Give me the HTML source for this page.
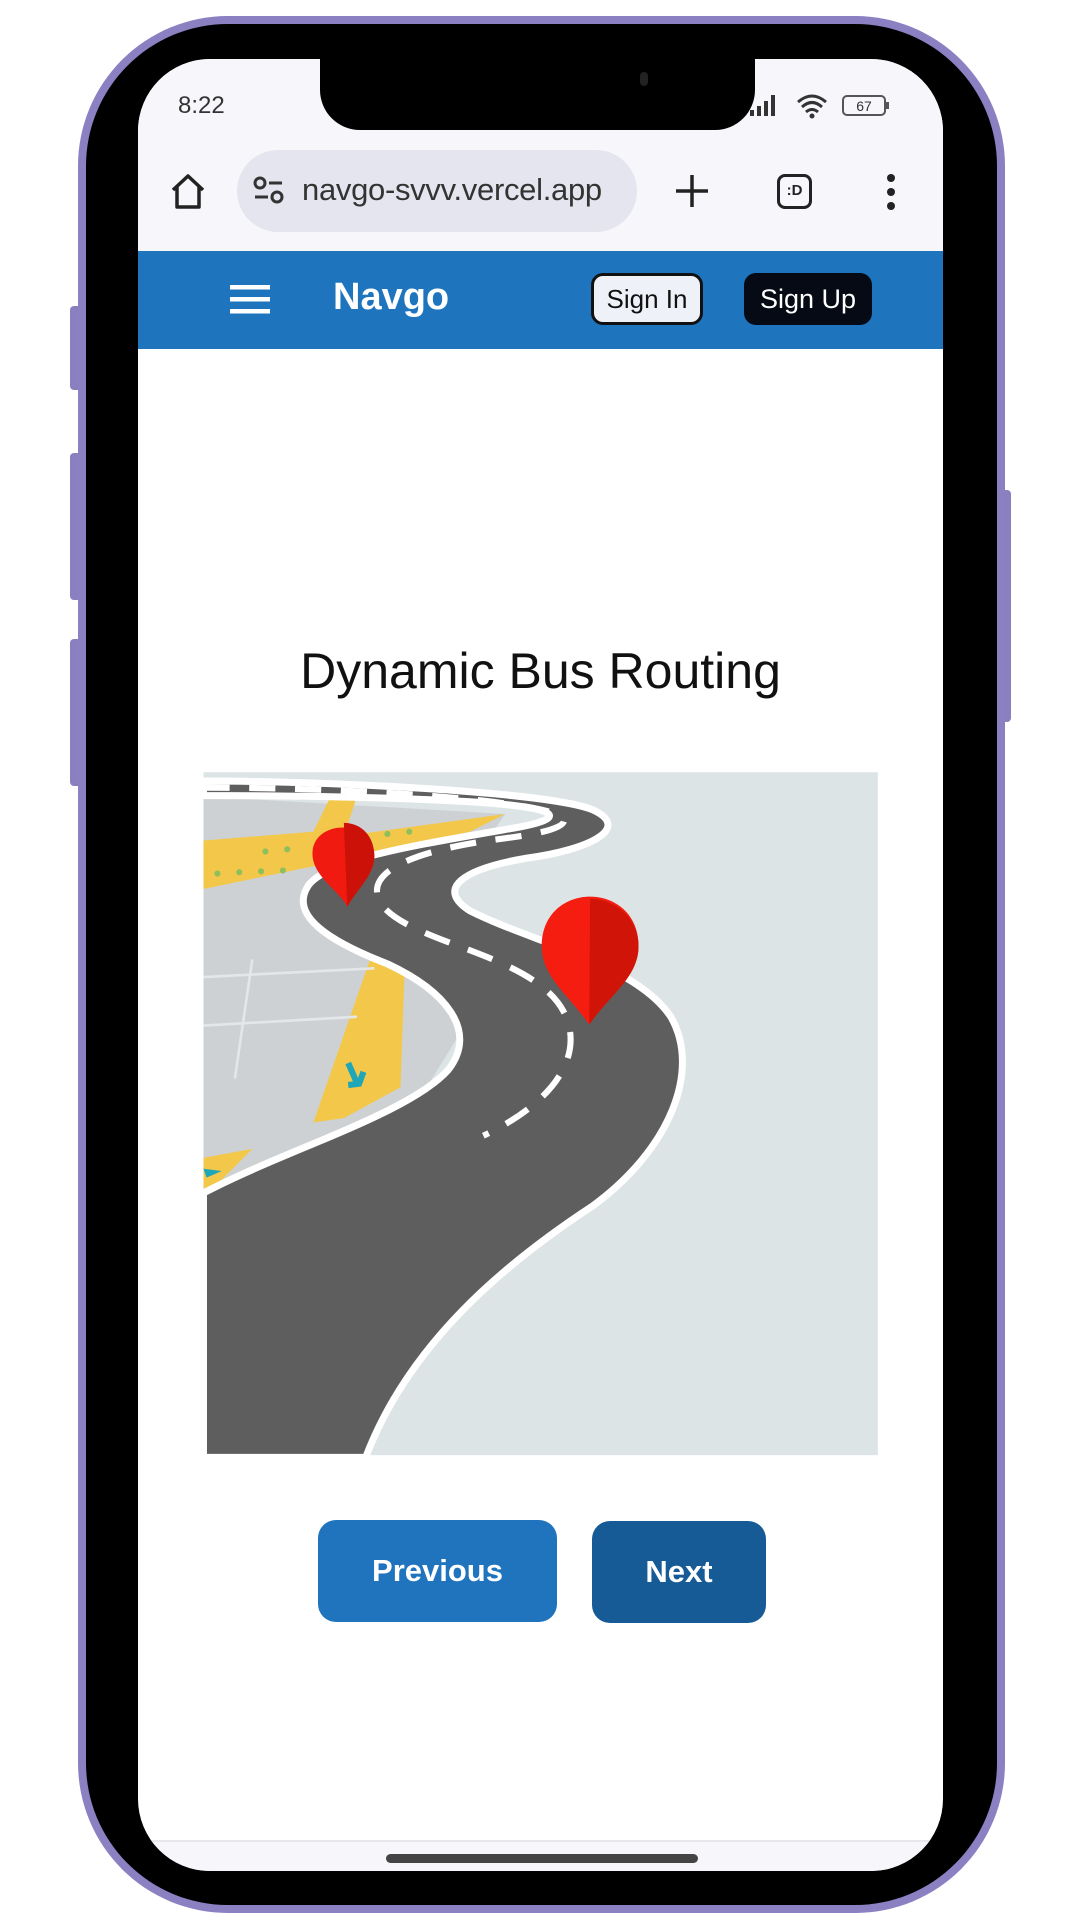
<!DOCTYPE html>
<html><head><meta charset="utf-8"><style>
*{margin:0;padding:0;box-sizing:border-box}
html,body{width:1080px;height:1920px;background:#fff;overflow:hidden;font-family:"Liberation Sans",sans-serif}
.abs{position:absolute}
</style></head><body>
<!-- side buttons -->
<div class="abs" style="left:70px;top:306px;width:12px;height:84px;background:#8a80c0;border-radius:4px"></div>
<div class="abs" style="left:70px;top:453px;width:12px;height:147px;background:#8a80c0;border-radius:4px"></div>
<div class="abs" style="left:70px;top:639px;width:12px;height:147px;background:#8a80c0;border-radius:4px"></div>
<div class="abs" style="left:998px;top:490px;width:13px;height:232px;background:#8a80c0;border-radius:4px"></div>
<!-- frame -->
<div class="abs" style="left:78px;top:16px;width:927px;height:1897px;background:#8a80c2;border-radius:150px"></div>
<div class="abs" style="left:86px;top:24px;width:911px;height:1881px;background:#000;border-radius:142px"></div>
<!-- screen -->
<div class="abs" style="left:138px;top:59px;width:805px;height:1812px;background:#fff;border-radius:72px;overflow:hidden">
  <div class="abs" style="left:0;top:0;width:805px;height:192px;background:#f7f7fb"></div>
  <div class="abs" style="left:0;top:1781px;width:805px;height:40px;background:#f7f7fb;border-top:2px solid #e8e8ec"></div>
  <div class="abs" style="left:248px;top:1795px;width:312px;height:9px;background:#444;border-radius:5px"></div>
</div>
<!-- notch -->
<div class="abs" style="left:320px;top:40px;width:435px;height:90px;background:#000;border-radius:0 0 40px 40px"></div>
<div class="abs" style="left:640px;top:72px;width:8px;height:14px;background:#222;border-radius:4px"></div>
<!-- status -->
<div class="abs" style="left:178px;top:92px;font-size:24px;color:#333">8:22</div>
<svg class="abs" style="left:748px;top:90px" width="150" height="30" viewBox="0 0 150 30">
  <rect x="2" y="20" width="4" height="6" fill="#333"/><rect x="9" y="16" width="4" height="10" fill="#333"/><rect x="16" y="11" width="4" height="15" fill="#333"/><rect x="23" y="5" width="4" height="21" fill="#333"/>
  <path d="M50 12 Q64 0 78 12 M54 17 Q64 8 74 17 M58 22 Q64 17 70 22" stroke="#333" stroke-width="3" fill="none"/><circle cx="64" cy="26" r="2.5" fill="#333"/>
  <rect x="95" y="6" width="42" height="19" rx="4" fill="none" stroke="#555" stroke-width="2"/><rect x="138" y="12" width="3" height="7" fill="#555"/>
  <text x="116" y="21" font-size="14" text-anchor="middle" fill="#333" font-family="Liberation Sans">67</text>
</svg>
<!-- toolbar -->
<svg class="abs" style="left:168px;top:172px" width="40" height="40" viewBox="0 0 40 40"><path d="M5 18 L20 4 L35 18 M9 15 V35 H31 V15" stroke="#222" stroke-width="3.5" fill="none" stroke-linejoin="round"/></svg>
<div class="abs" style="left:237px;top:150px;width:400px;height:82px;background:#e4e5ee;border-radius:41px"></div>
<svg class="abs" style="left:252px;top:176px" width="34" height="30" viewBox="0 0 34 30"><circle cx="8" cy="7" r="5" stroke="#333" stroke-width="3" fill="none"/><line x1="17" y1="7" x2="30" y2="7" stroke="#333" stroke-width="3"/><line x1="3" y1="21" x2="16" y2="21" stroke="#333" stroke-width="3"/><circle cx="25" cy="21" r="5" stroke="#333" stroke-width="3" fill="none"/></svg>
<div class="abs" style="left:302px;top:172px;font-size:31px;color:#333;letter-spacing:-0.3px">navgo-svvv.vercel.app</div>
<svg class="abs" style="left:674px;top:173px" width="36" height="36"><path d="M18 2V34M2 18H34" stroke="#222" stroke-width="3.5"/></svg>
<div class="abs" style="left:777px;top:174px;width:35px;height:35px;border:3.5px solid #222;border-radius:8px;font-size:15px;font-weight:bold;text-align:center;line-height:28px;color:#222">:D</div>
<svg class="abs" style="left:884px;top:172px" width="14" height="40"><circle cx="7" cy="6" r="4" fill="#222"/><circle cx="7" cy="20" r="4" fill="#222"/><circle cx="7" cy="34" r="4" fill="#222"/></svg>
<!-- header -->
<div class="abs" style="left:138px;top:251px;width:805px;height:98px;background:#1e75be"></div>
<svg class="abs" style="left:230px;top:283px" width="42" height="34"><rect x="0" y="2" width="40" height="4.5" fill="#fff"/><rect x="0" y="14" width="40" height="4.5" fill="#fff"/><rect x="0" y="26" width="40" height="4.5" fill="#fff"/></svg>
<div class="abs" style="left:333px;top:276px;font-size:38px;font-weight:bold;color:#fff">Navgo</div>
<div class="abs" style="left:591px;top:273px;width:112px;height:52px;background:#eef1f8;border:3px solid #111;border-radius:12px;font-size:26px;text-align:center;line-height:46px;color:#111">Sign In</div>
<div class="abs" style="left:744px;top:273px;width:128px;height:52px;background:#060a14;border-radius:12px;font-size:27px;text-align:center;line-height:52px;color:#fff">Sign Up</div>
<!-- title -->
<div class="abs" style="left:138px;top:642px;width:805px;text-align:center;font-size:50px;color:#111">Dynamic Bus Routing</div>
<!-- image -->
<svg class="abs" style="left:200px;top:770px" width="680" height="690" viewBox="0 0 1560 1566" preserveAspectRatio="none">
  <rect x="8" y="5" width="1547" height="1550" fill="#dde4e6"/>
  <path d="M8 60 L700 100 L560 300 L620 560 L520 720 L200 880 L8 960 Z" fill="#cdd1d4"/>
  <path d="M8 160 L260 140 L300 60 L360 60 L330 150 L700 100 L620 140 L400 190 L8 270 Z" fill="#f3c84a"/>
  <path d="M390 430 L470 440 L460 720 L330 790 L260 800 Z" fill="#f3c84a"/>
  <path d="M8 880 L120 860 L40 940 L8 950 Z" fill="#f3c84a"/>
  <path d="M8 470 L400 450 M8 580 L360 560 M120 430 L80 700" stroke="#e4e7e9" stroke-width="6"/>
  <g fill="#8fbf5a"><circle cx="40" cy="235" r="7"/><circle cx="90" cy="232" r="7"/><circle cx="140" cy="230" r="7"/><circle cx="190" cy="228" r="7"/><circle cx="430" cy="145" r="7"/><circle cx="480" cy="140" r="7"/><circle cx="150" cy="185" r="7"/><circle cx="200" cy="180" r="7"/></g>
  <path d="M340 665 L360 710 M340 715 L365 712 L375 685" stroke="#1fa7b8" stroke-width="14" fill="none"/>
  <path d="M8 905 L50 910 L15 925 Z" fill="#1fa7b8"/>
  <path d="M8 25 C300 25 800 50 900 90 C990 130 900 180 750 200 C600 225 540 270 620 320 C760 390 1000 440 1080 560 C1150 680 1080 860 900 990 C700 1120 480 1300 380 1560 L8 1560 L8 960 C200 860 480 780 570 680 C640 590 560 500 430 440 C300 390 200 330 250 260 C300 200 500 170 700 135 C860 110 830 85 620 72 C400 60 200 58 8 58 Z" fill="#5e5e5e" stroke="#fff" stroke-width="16"/>
  <path d="M8 40 C300 40 700 60 820 100 C860 120 820 140 700 155 C500 180 360 230 420 310 C500 400 780 420 840 560 C880 660 800 760 650 830" fill="none" stroke="#fff" stroke-width="14" stroke-dasharray="60 45"/>
  <path d="M258 190 C258 110 400 110 400 195 C400 240 360 270 338 310 C315 270 258 240 258 190 Z" fill="#f01a10"/>
  <path d="M330 120 C370 120 400 150 400 195 C400 240 360 270 338 310 Z" fill="#cc1208"/>
  <path d="M784 400 C784 250 1006 250 1006 400 C1006 470 940 510 893 578 C846 510 784 470 784 400 Z" fill="#f51c10"/>
  <path d="M895 292 C960 295 1006 340 1006 400 C1006 470 940 510 893 578 Z" fill="#d01508"/>
</svg>
<!-- buttons -->
<div class="abs" style="left:318px;top:1520px;width:239px;height:102px;background:#1f74bd;border-radius:18px;color:#fff;font-weight:bold;font-size:31px;text-align:center;line-height:102px">Previous</div>
<div class="abs" style="left:592px;top:1521px;width:174px;height:102px;background:#175b96;border-radius:18px;color:#fff;font-weight:bold;font-size:31px;text-align:center;line-height:102px">Next</div>
</body></html>
